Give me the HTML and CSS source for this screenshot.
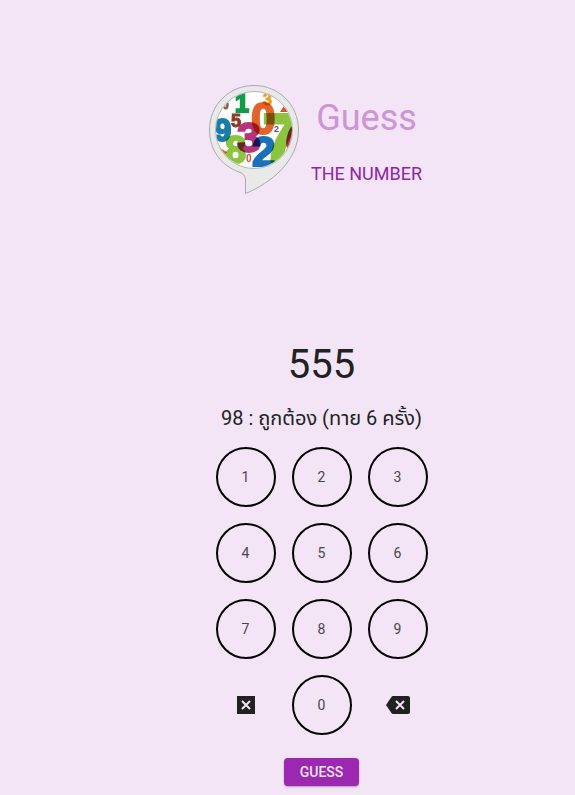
FILE: index.html
```html
<!DOCTYPE html>
<html lang="th">
<head>
<meta charset="utf-8">
<meta name="viewport" content="width=device-width, initial-scale=1">
<title>Guess the Number</title>
<link rel="stylesheet" href="styles.css">
</head>
<body>
<main class="game">
  <header class="brand">
    <svg class="logo" viewBox="0 0 90 110" aria-hidden="true">
      <defs><clipPath id="disc"><circle cx="45" cy="45" r="38"/></clipPath></defs>
      <path class="bubble" d="M45 .5C20 .5 .5 20 .5 45C.5 66 13 81 30 87Q36.500 89 36.500 95V108.500C62 98 89.500 76 89.500 45C89.500 20 70 .5 45 .5Z"/>
      <circle class="plate" cx="45" cy="45" r="38.500"/>
      <g class="digits" clip-path="url(#disc)">
        <text class="small" x="14" y="24" font-size="10" color="#8c5a3a">0</text>
        <text class="large" x="26" y="27" font-size="25" color="#139c48">1</text>
        <text class="small" x="54" y="20" font-size="16" color="#e8a020">3</text>
        <text class="large" x="42" y="49" font-size="44" color="#e2642a">0</text>
        <text class="small" x="22" y="42" font-size="18" color="#8c3a26">5</text>
        <text class="large" x="5" y="56" font-size="31" color="#1a7ea8">9</text>
        <path fill="#e04a30" d="M71 27L75 21L80 27Z"/>
        <path fill="#e2642a" d="M9 62L18 67L14 72Z"/>
        <text class="large" x="16" y="78" font-size="38" color="#8bc53f">8</text>
        <text class="heavy" x="54" y="76" font-size="66" color="#8bc53f">7</text>
        <text class="large" x="28" y="67" font-size="43" color="#b5357b">3</text>
        <text class="large" x="43" y="81" font-size="42" color="#1971b9">2</text>
        <text class="tiny" x="37" y="77" font-size="10" color="#d9453a">0</text>
        <text class="tiny" x="65" y="47" font-size="9" color="#6a3a90">2</text>
        <ellipse class="blend" cx="82" cy="52" rx="4" ry="12" transform="rotate(14 82 52)" fill="#c2305a"/>
      </g>
    </svg>
    <div class="titles">
      <h1 class="title">Guess</h1>
      <p class="subtitle">THE NUMBER</p>
    </div>
  </header>

  <output class="entry">555</output>
  <p class="message">98 : ถูกต้อง (ทาย 6 ครั้ง)</p>

  <div class="keypad">
    <button class="key" type="button">1</button>
    <button class="key" type="button">2</button>
    <button class="key" type="button">3</button>
    <button class="key" type="button">4</button>
    <button class="key" type="button">5</button>
    <button class="key" type="button">6</button>
    <button class="key" type="button">7</button>
    <button class="key" type="button">8</button>
    <button class="key" type="button">9</button>
    <button class="key key-icon" type="button" aria-label="Clear">
      <svg class="icon" viewBox="0 0 24 24"><path class="shape" d="M3 3H21V21H3Z"/><path class="cross" d="M8 8L16 16M16 8L8 16"/></svg>
    </button>
    <button class="key" type="button">0</button>
    <button class="key key-icon" type="button" aria-label="Backspace">
      <svg class="icon" viewBox="0 0 24 24"><path class="shape" d="M22 3H7C6.300 3 5.800 3.400 5.400 3.900L0 12L5.400 20.100C5.800 20.600 6.300 21 7 21H22C23.100 21 24 20.100 24 19V5C24 3.900 23.100 3 22 3Z"/><path class="cross" d="M10 8L18 16M18 8L10 16"/></svg>
    </button>
  </div>

  <button class="submit" type="button">GUESS</button>
</main>
</body>
</html>
```
FILE: styles.css
```css
* {
  box-sizing: border-box;
}

body {
  margin: 0;
  background: #f3e5f5;
  color: #212121;
  font-family: Roboto, "Noto Sans Thai", "Noto Sans", sans-serif;
}

.game {
  display: flex;
  flex-direction: column;
  align-items: center;
  padding: 85px 0 8px 68px;
}

.brand {
  display: flex;
  align-items: center;
}

.logo {
  width: 90px;
  height: 110px;
}

.bubble {
  fill: #e9e9ea;
  stroke: #aaa8ac;
}

.plate {
  fill: #fff;
  stroke: #b5b3b7;
}

.digits {
  isolation: isolate;
  font-family: "Liberation Sans", sans-serif;
  font-weight: 700;
}

.digits text {
  fill: currentColor;
  stroke: currentColor;
  mix-blend-mode: multiply;
}

.heavy {
  stroke-width: 4px;
}

.large {
  stroke-width: 2px;
}

.small {
  stroke-width: 1px;
}

.tiny {
  stroke-width: 0;
}

.blend {
  mix-blend-mode: multiply;
}

.titles {
  padding: 0 12px;
  text-align: center;
}

.title {
  margin: 2px 0 22px;
  color: #ce93d8;
  font-size: 36px;
  font-weight: 400;
  line-height: 44px;
}

.subtitle {
  margin: 0;
  color: #8e24aa;
  font-size: 18px;
  line-height: 24px;
}

.entry {
  margin-top: 146px;
  font-size: 40px;
  line-height: 48px;
}

.message {
  margin: 15px 0;
  font-size: 20px;
  line-height: 28px;
}

.keypad {
  display: grid;
  grid-template-columns: repeat(3, 60px);
  gap: 16px;
}

.key {
  display: grid;
  place-items: center;
  height: 60px;
  padding: 0;
  border: 2px solid #000;
  border-radius: 50%;
  background: none;
  color: #49454f;
  font: 400 14px/20px Roboto, sans-serif;
}

.key-icon {
  border-color: transparent;
}

.icon {
  width: 24px;
  height: 24px;
}

.shape {
  fill: #212121;
}

.cross {
  fill: none;
  stroke: #f3e5f5;
  stroke-width: 2px;
}

.submit {
  margin-top: 23px;
  padding: 4px 16px;
  border: 0;
  border-radius: 4px;
  background: #9c27b0;
  box-shadow: 0 1px 2px rgba(0, 0, 0, 0.3);
  color: #f3e5f5;
  font: 500 14px/20px Roboto, sans-serif;
}
```
